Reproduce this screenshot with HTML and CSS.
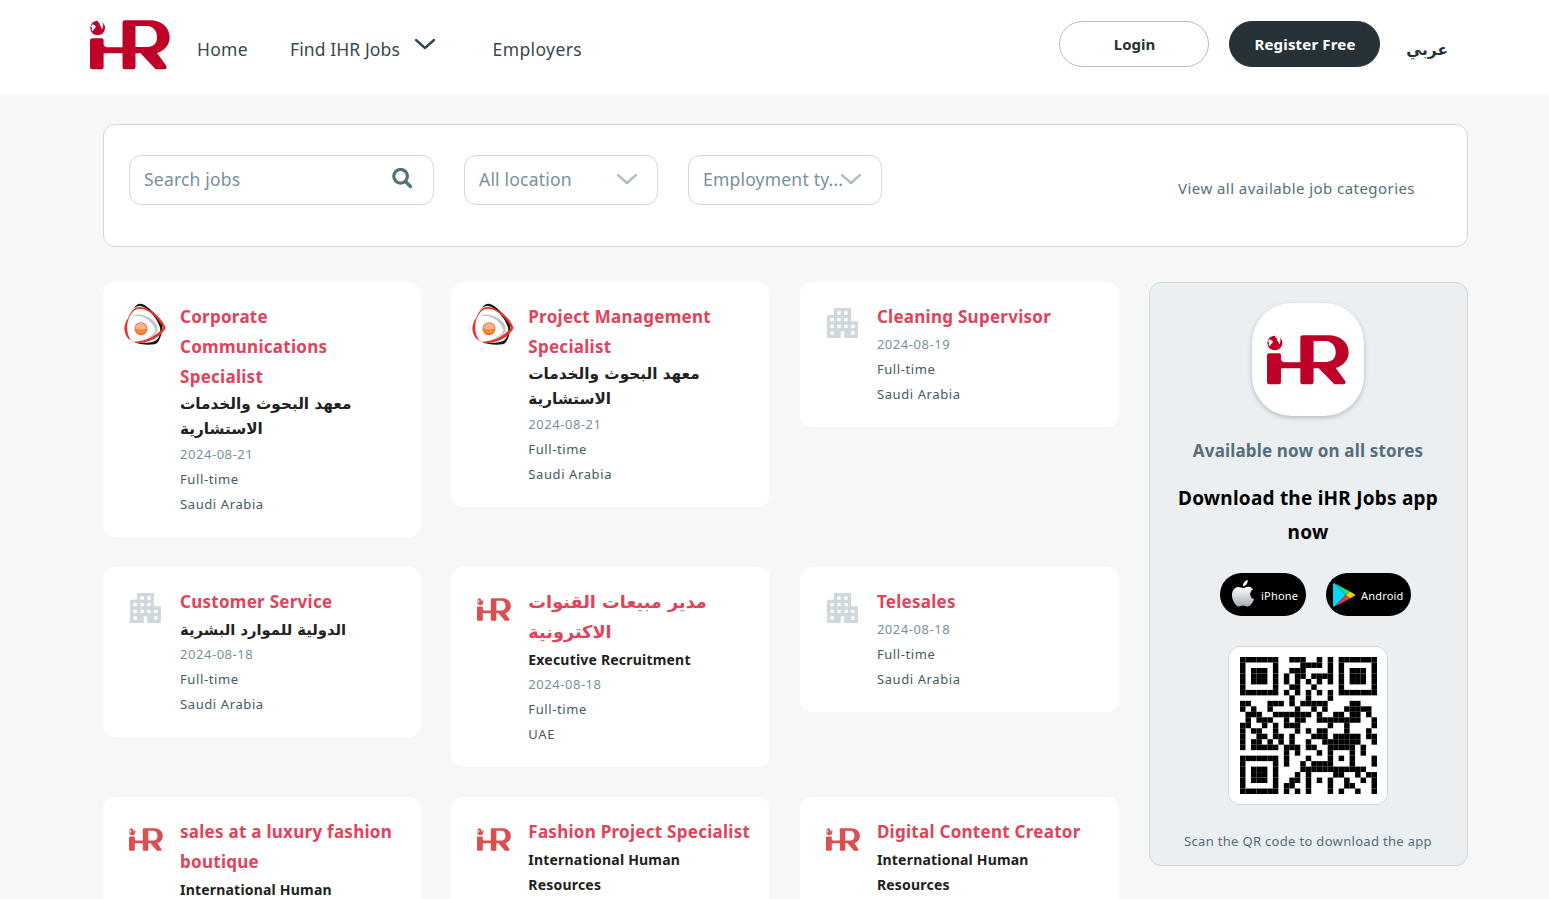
FILE: index.html
```html
<!DOCTYPE html>
<html lang="en">
<head>
<meta charset="utf-8">
<title>IHR Jobs</title>
<link rel="stylesheet" href="styles.css">
</head>
<body>
<svg class="defs" aria-hidden="true">
  <symbol id="ihr" viewBox="0 0 241 150" preserveAspectRatio="none">
    <path fill-rule="evenodd" d="M8 55H36Q41 55 41 60V73Q43 82 52 82H98V8Q98 1 106 1H180C215 1 240 22 240 52C240 75 225 92 202 99L230 138Q233 148 224 148H198L152 100H137V142Q137 148 131 148H104Q98 148 98 142V100H41V142Q41 148 35 148H6Q0 148 0 142V62Q0 55 8 55ZM137 18V81H172C191 81 202 71 202 52C202 30 188 18 172 18Z"/>
    <circle cx="23" cy="24" r="22"/>
    <path fill="#fff" d="M3 18L8 13L14 16L18 20L15 25L11 28L9 34L5 30L6 24ZM25 0L24 6L29 10L30 17L34 20L35 28L39 25L41 16L47 20V0Z"/>
    <path d="M37 5L44 16L45 25L38 27L40 15Z"/>
  </symbol>
  <symbol id="building" viewBox="3 3 18 18" preserveAspectRatio="none">
    <path d="M17 11V3H7v4H3v14h8v-4h2v4h8V11h-4zM7 19H5v-2h2v2zm0-4H5v-2h2v2zm0-4H5V9h2v2zm4 4H9v-2h2v2zm0-4H9V9h2v2zm0-4H9V5h2v2zm4 8h-2v-2h2v2zm0-4h-2V9h2v2zm0-4h-2V5h2v2zm4 12h-2v-2h2v2zm0-4h-2v-2h2v2z"/>
  </symbol>
  <symbol id="institute" viewBox="0 0 126 126">
    <path fill="#161616" fill-rule="evenodd" d="M29 16C36 4 47-2 60 5C81 17 105 43 116 66C114 91 108 120 92 124C72 127 46 125 30 117C51 120 73 121 91 115C106 108 110 90 108 73C99 47 79 22 57 11C45 6 37 10 29 16Z"/>
    <path fill="#e5322d" fill-rule="evenodd" d="M12 46C22 18 37 7 60 14C89 21 117 51 125 75C115 96 86 116 50 120C20 120 3 104 1 78C2 65 5 54 12 46ZM14 47C6 68 8 99 25 116C59 117 100 98 117 74C106 52 84 26 58 19C37 13 24 24 14 47Z"/>
    <path fill="#c4c4c4" d="M24 40C39 29 66 36 85 50C99 61 104 74 99 87C91 101 67 112 47 114C67 107 87 99 94 83C91 62 65 40 45 39Q33 37 24 40Z"/>
    <path fill="#fff" d="M30 43C50 38 80 58 91 80C85 95 63 106 38 109C17 98 15 60 30 43Z"/>
    <circle cx="51" cy="77" r="19.5" fill="#ef6a38"/><path fill="#f9b58a" d="M34 77A17 17 0 0 1 68 77Q51 83 34 77Z"/><path fill="#f39a1f" d="M35 80Q51 86 67 80A17 17 0 0 1 35 80Z"/>
  </symbol>
</svg>

<header class="topbar">
  <svg class="brand"><use href="#ihr"/></svg>
  <nav class="nav">
    <a class="home">Home</a>
    <a class="find">Find IHR Jobs</a>
    <svg class="chev" viewBox="0 0 20 11"><path d="M1 1L10 9L19 1"/></svg>
    <a class="emp">Employers</a>
  </nav>
  <div class="actions">
    <a class="btn">Login</a>
    <a class="btn dark">Register Free</a>
    <a class="lang" lang="ar">عربي</a>
  </div>
</header>

<main>
  <section class="filters">
    <div class="field search"><span>Search jobs</span>
      <svg class="mag" viewBox="0 0 21 21"><circle cx="8.6" cy="8.3" r="6.8"/><path d="M13.5 13.5L18.500 18.500"/></svg></div>
    <div class="field"><span>All location</span><svg class="chev" viewBox="0 0 20 11"><path d="M1 1L10 9L19 1"/></svg></div>
    <div class="field"><span>Employment ty...</span><svg class="chev" viewBox="0 0 20 11"><path d="M1 1L10 9L19 1"/></svg></div>
    <a class="all">View all available job categories</a>
  </section>

  <div class="content">
    <div class="jobs">
      <article class="card"><div class="icon"><svg class="inst"><use href="#institute"/></svg></div><div>
        <h3>Corporate<br>Communications<br>Specialist</h3><h4 class="ar">معهد البحوث والخدمات<br>الاستشارية</h4><p class="date">2024-08-21</p><p>Full-time</p><p>Saudi Arabia</p></div></article>
      <article class="card"><div class="icon"><svg class="inst"><use href="#institute"/></svg></div><div>
        <h3>Project Management<br>Specialist</h3><h4 class="ar">معهد البحوث والخدمات<br>الاستشارية</h4><p class="date">2024-08-21</p><p>Full-time</p><p>Saudi Arabia</p></div></article>
      <article class="card"><div class="icon"><svg class="build"><use href="#building"/></svg></div><div>
        <h3>Cleaning Supervisor</h3><p class="date">2024-08-19</p><p>Full-time</p><p>Saudi Arabia</p></div></article>
      <article class="card"><div class="icon"><svg class="build"><use href="#building"/></svg></div><div>
        <h3>Customer Service</h3><h4 class="ar narrow">الدولية للموارد البشرية</h4><p class="date">2024-08-18</p><p>Full-time</p><p>Saudi Arabia</p></div></article>
      <article class="card"><div class="icon"><svg class="mini"><use href="#ihr"/></svg></div><div>
        <h3 class="ar">مدير مبيعات القنوات<br>الاكترونية</h3><h4>Executive Recruitment</h4><p class="date">2024-08-18</p><p>Full-time</p><p>UAE</p></div></article>
      <article class="card"><div class="icon"><svg class="build"><use href="#building"/></svg></div><div>
        <h3>Telesales</h3><p class="date">2024-08-18</p><p>Full-time</p><p>Saudi Arabia</p></div></article>
      <article class="card"><div class="icon"><svg class="mini"><use href="#ihr"/></svg></div><div>
        <h3>sales at a luxury fashion<br>boutique</h3><h4>International Human</h4></div></article>
      <article class="card"><div class="icon"><svg class="mini"><use href="#ihr"/></svg></div><div>
        <h3>Fashion Project Specialist</h3><h4>International Human<br>Resources</h4></div></article>
      <article class="card"><div class="icon"><svg class="mini"><use href="#ihr"/></svg></div><div>
        <h3>Digital Content Creator</h3><h4>International Human<br>Resources</h4></div></article>
    </div>

    <aside class="app">
      <div class="appicon"><svg><use href="#ihr"/></svg></div>
      <p class="avail">Available now on all stores</p>
      <h2>Download the iHR Jobs app<br>now</h2>
      <div class="stores">
        <a class="store"><svg class="apple" viewBox="0 0 22 27"><defs><linearGradient id="silver" x2="0" y2="1"><stop offset=".25" stop-color="#fff"/><stop offset="1" stop-color="#a3adb4"/></linearGradient></defs><path fill="url(#silver)" d="M15.8 0C16 3 13.7 6 11 6.2C10.7 3.3 13 .7 15.8 0ZM11 8C12.4 8 13.8 6.7 16.2 6.7C18.3 6.8 20 7.8 21 9.3C16.8 12 17.5 17.7 22 19.3C20.8 22.6 18.5 26.5 15.8 26.5C14 26.5 13.3 25.4 11.2 25.4C9.2 25.4 8.3 26.5 6.7 26.5C3.7 26.5 0 20.5 0 15.3C0 10 3 7 6.2 7C8.3 7 9.8 8 11 8Z"/></svg><span>iPhone</span></a>
        <a class="store droid"><svg class="play" viewBox="0 0 22 24"><path fill="#00d7fe" d="M1 0L13 12L1 24Q0 23.500 0 22V2Q0 .5 1 0Z"/><path fill="#18e07e" d="M1 0L17 8.500L13 12Z"/><path fill="#f4344c" d="M1 24L17 15.500L13 12Z"/><path fill="#ffca00" d="M17 8.500L22 11.500Q22.300 12 22 12.500L17 15.500L13 12Z"/></svg><span>Android</span></a>
      </div>
      <div class="qrbox"><svg id="qr" viewBox="0 0 25 25"></svg></div>
      <p class="scan">Scan the QR code to download the app</p>
    </aside>
  </div>
</main>
<script src="qr.js"></script>
</body>
</html>
```
FILE: styles.css
```css
* { box-sizing: border-box; }
body { margin: 0; height: 899px; overflow: hidden; background: #f7f7f7; font-family: "Noto Sans", "DejaVu Sans", sans-serif; color: #37474f; }
h2, h3, h4, p { margin: 0; }
.defs { display: none; }
svg { display: block; flex: none; }
.topbar { height: 94px; background: #fff; padding: 0 101px 0 90px; display: flex; align-items: flex-start; }
.brand { width: 80px; height: 50px; margin-top: 20px; fill: #bf0027; }
.nav { display: flex; margin-left: 27px; padding-top: 36px; font-size: 17.5px; line-height: 26px; white-space: nowrap; letter-spacing: .25px; }
.home { width: 93px; }
.find { width: 125px; letter-spacing: .1px; }
.emp { margin-left: 57.5px; letter-spacing: .4px; }
.chev { width: 20px; height: 11px; fill: none; stroke: #37474f; stroke-width: 2.4; stroke-linecap: round; stroke-linejoin: round; }
.nav .chev { margin-top: 3px; }
.actions { margin-left: auto; display: flex; padding-top: 21px; }
.btn { width: 150px; height: 46px; margin-right: 20px; border: 1px solid #b0bec5; border-radius: 23px; font-size: 15px; font-weight: 700; line-height: 45px; text-align: center; color: #263238; padding-left: 1px; }
.btn.dark { width: 151px; margin-right: 28px; background: #263238; border-color: #263238; color: #fff; letter-spacing: .16px; }
.lang { width: 40px; font-size: 15.5px; font-weight: 700; line-height: 58px; font-family: "DejaVu Sans", sans-serif; color: #263238; white-space: nowrap; direction: rtl; }
main { padding: 30px 81px 0 103px; }
.filters { height: 123px; background: #fff; border: 1px solid #cfd8dc; border-radius: 12px; padding: 30px 52px 0 25px; display: flex; align-items: flex-start; gap: 30px; }
.field { width: 194px; height: 50px; border: 1px solid #cfd8dc; border-radius: 12px; padding: 0 20px 2px 14px; display: flex; align-items: center; justify-content: space-between; font-size: 17.5px; letter-spacing: .2px; color: #78909c; white-space: nowrap; }
.field span { width: 138px; }
.field.search { width: 305px; }
.field .chev { stroke: #b0bec5; }
.mag { width: 21px; height: 21px; fill: none; stroke: #546e7a; stroke-width: 3.2; stroke-linecap: round; margin-top: -2px; }
.all { margin: 21px 0 0 auto; font-size: 15px; line-height: 25px; letter-spacing: .44px; color: #546e7a; }
.content { display: grid; grid-template-columns: 1016px 319px; gap: 30px; margin-top: 35px; align-items: start; }
.jobs { display: grid; grid-template-columns: 318.3px 318.6px 319px; gap: 30px; align-items: start; }
.card { background: #fff; border-radius: 12px; padding: 20px 0; display: grid; grid-template-columns: 77px 1fr; white-space: nowrap; }
.icon { padding-left: 21px; }
.inst { width: 42px; height: 42px; margin-top: 1px; }
.build { width: 31px; height: 30px; margin: 6px 0 0 6px; fill: #cfd8dc; }
.mini { width: 34px; height: 23px; margin: 11px 0 0 5px; fill: #d85052; }
h3 { font-size: 17px; line-height: 30px; font-weight: 700; color: #e0435a; letter-spacing: .27px; }
h4 { font-size: 14px; line-height: 25px; font-weight: 700; color: #212121; letter-spacing: .2px; }
h4.ar { font: 700 15.25px/25px "DejaVu Sans", sans-serif; letter-spacing: 0; }
h4.ar.narrow { font-size: 14.75px; }
h3.ar { font: 700 17.7px/30px "DejaVu Sans", sans-serif; letter-spacing: 0; }
.card p { font-size: 13px; line-height: 25px; letter-spacing: .6px; color: #455a64; }
.card p.date { color: #78909c; letter-spacing: .54px; }
.app { height: 584px; background: #ebeff2; border: 1px solid #cfd8dc; border-radius: 12px; padding: 20px 1px 0 0; display: flex; flex-direction: column; align-items: center; text-align: center; white-space: nowrap; }
.appicon { width: 112px; height: 113px; background: #fff; border-radius: 40px; box-shadow: 0 2px 5px #b0bec5; padding: 32px 0 0 15px; }
.appicon svg { width: 82px; height: 50px; fill: #bf0027; }
.avail { margin-top: 22px; font-size: 17px; line-height: 26px; font-weight: 700; color: #546e7a; letter-spacing: .16px; }
h2 { margin-top: 17px; font-size: 19px; line-height: 34px; font-weight: 700; color: #000; letter-spacing: .22px; }
.stores { display: flex; gap: 20px; margin: 24px 0 0 15px; }
.store { width: 86px; height: 43px; border-radius: 22px; background: #000; color: #fff; display: flex; align-items: center; padding-left: 12px; font-size: 11px; letter-spacing: .2px; }
.store span { margin-top: 2px; }
.apple { width: 22px; height: 27px; margin: -3px 7px 0 0; }
.store.droid { width: 85px; padding-left: 7px; }
.play { width: 22px; height: 24px; margin-right: 6px; }
.qrbox { width: 160px; height: 159px; margin-top: 30px; background: #fff; border: 1px solid #cfd8dc; border-radius: 12px; padding: 10px 11px; }
#qr { width: 137px; height: 137px; }
.scan { margin-top: 24px; font-size: 13px; line-height: 25px; letter-spacing: .32px; color: #546e7a; }
```
FILE: qr.js
```js
// One string per row of the code, # marks a dark module.
const rows = [
  "#######  ###  # # #######",
  "#     #    #### # #     #",
  "# ### #  ###    # # ### #",
  "# ### # # ## #### # ### #",
  "# ### # # # # # # # ### #",
  "#     #  ##  #    #     #",
  "####### # # # # # #######",
  "         #  #   #        ",
  "##   ### # #####    ##   ",
  "# #  #    #  # #   ##### ",
  " ###  ####### #  ## ## # ",
  " # ###  # ##  ########  #",
  "##  # # ###     #  #    #",
  "# ##  #   # # ##   #   # ",
  "#  ## ## #   ### ##### ##",
  "# ## # # #  #  #######  #",
  "# ##### ### ##  ##### #  ",
  "        # #   # #   # #  ",
  "####### #   #   # # #   #",
  "#     # #  # ####   #   #",
  "# ### #    ############  ",
  "# ### #   # #    ##  # ##",
  "# ### #  ## # # #  #  # #",
  "#     # ##  #   #  ##   #",
  "####### # # #   # #  #  #"
];
const qr = document.getElementById("qr");
rows.forEach((row, y) => [...row].forEach((c, x) => {
  if (c !== "#") return;
  const r = document.createElementNS("http://www.w3.org/2000/svg", "rect");
  r.setAttribute("x", x);
  r.setAttribute("y", y);
  r.setAttribute("width", 1);
  r.setAttribute("height", 1);
  qr.append(r);
}));
```
